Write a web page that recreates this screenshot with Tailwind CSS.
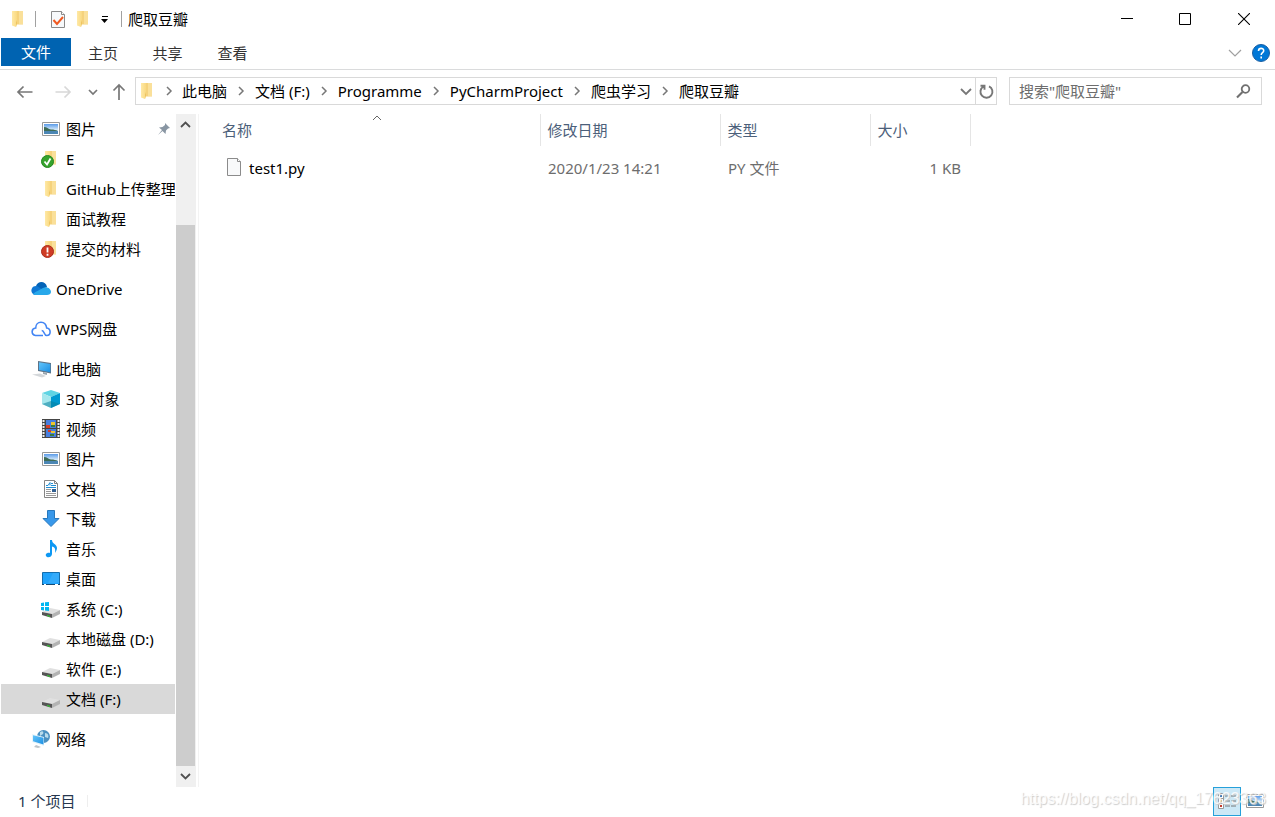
<!DOCTYPE html>
<html lang="zh-CN">
<head>
<meta charset="utf-8">
<meta name="viewport" content="width=device-width, initial-scale=1">
<title>爬取豆瓣</title>
<script src="https://cdn.jsdelivr.net/npm/@tailwindcss/browser@4"></script>
</head>
<body class="flex h-screen flex-col overflow-hidden bg-white font-['Noto_Sans','Noto_Sans_CJK_SC',sans-serif] text-[15px] leading-5 text-black">

<svg class="absolute size-0" aria-hidden="true">
  <defs>
    <linearGradient id="gold" x1="0" x2="1"><stop offset="0" stop-color="#ffe9a6"/><stop offset="1" stop-color="#f9d981"/></linearGradient>
    <linearGradient id="sky" x1="0" y1="0" x2="0" y2="1"><stop offset="0" stop-color="#5b9be8"/><stop offset=".6" stop-color="#dceefb"/></linearGradient>
    <linearGradient id="screen" x1="0" y1="0" x2="1" y2="1"><stop offset="0" stop-color="#63c5fb"/><stop offset="1" stop-color="#1c8fe3"/></linearGradient>
  </defs>
  <symbol id="folder" viewBox="0 0 20 20"><path d="M8 2h7v13.500H8z" fill="#f5d27c"/><path d="M11 2h4v13h-4z" fill="#fae09a"/><path d="M4 2h5v12l-1 4-4-1.500z" fill="url(#gold)"/><path d="M8 11l1 3-1 4z" fill="#ecc15c"/></symbol>
  <symbol id="picture" viewBox="0 0 20 20"><path d="M1.500 3.500h17v13h-17z" fill="#fff" stroke="#989898"/><path d="M3 5h14v10H3z" fill="url(#sky)"/><path d="M3 8c3 0 4 2 7 2.500 3 0 5 .5 7 1.500v1H3z" fill="#3d6b55"/><path d="M3 12h14v3H3z" fill="#4b86b4"/></symbol>
  <symbol id="drive" viewBox="0 0 20 20"><path d="M1 13l8-4 10 2-8 4z" fill="#e0e0e0"/><path d="M1 13l10 2v4L1 16z" fill="#555"/><path d="M11 15l8-4v4l-8 4z" fill="#b3b3b3"/><path d="M6 16l3 .7v1.300L6 17z" fill="#31c631"/></symbol>
  <symbol id="chev" viewBox="0 0 10 10"><path d="M3 1l4 4-4 4" fill="none" stroke="#777" stroke-width="1.500"/></symbol>
</svg>

<header>
  <div class="flex h-[38px] items-center">
    <div class="flex flex-1 items-center pl-2">
      <svg class="size-5"><use href="#folder"/></svg>
      <span class="ml-[7px] h-4 w-px bg-neutral-400"></span>
      <button class="ml-3 size-5" aria-label="属性"><svg viewBox="0 0 20 20"><path d="M3.500 2.500h10l3 3v13h-13z" fill="#f7f9fb" stroke="#8b8b8b"/><path d="M13.500 2.500v3h3" fill="#fff" stroke="#8b8b8b"/><path d="M5.500 11l3.500 4 6-7" fill="none" stroke="#f05a22" stroke-width="2"/></svg></button>
      <button class="ml-[5px] size-5" aria-label="新建文件夹"><svg class="size-5"><use href="#folder"/></svg></button>
      <button class="ml-2 size-2" aria-label="自定义快速访问工具栏"><svg viewBox="0 0 8 8"><path d="M1 1h6v1H1zM0 4h7L3.500 8z"/></svg></button>
      <span class="ml-3 h-4 w-px bg-neutral-400"></span>
      <h1 class="ml-[6px]">爬取豆瓣</h1>
    </div>
    <button class="flex h-full w-[58px] items-center justify-center" aria-label="最小化"><svg class="size-3" viewBox="0 0 12 12"><path d="M0 5.500h12" stroke="#000"/></svg></button>
    <button class="flex h-full w-[58px] items-center justify-center" aria-label="最大化"><svg class="size-3" viewBox="0 0 12 12"><path d="M.5.5h11v11H.5z" fill="none" stroke="#000"/></svg></button>
    <button class="mr-[2px] flex h-full w-[59px] items-center justify-center" aria-label="关闭"><svg class="size-3" viewBox="0 0 12 12"><path d="M0 0l12 12M12 0L0 12" fill="none" stroke="#000" stroke-width="1.100"/></svg></button>
  </div>
  <nav class="flex h-8 items-start border-b border-[#dadbdc] pl-px text-[#333]">
    <button class="h-7 w-[70px] bg-[#0063b1] text-white">文件</button>
    <button class="h-[30px] w-16">主页</button>
    <button class="h-[30px] w-[65px]">共享</button>
    <button class="h-[30px] w-[65px]">查看</button>
    <button class="mt-[9px] mr-[10px] ml-auto" aria-label="展开功能区"><svg class="h-3 w-[14px]" viewBox="0 0 14 12"><path d="M1 3l6 6 6-6" fill="none" stroke="#a0a0a0" stroke-width="1.200"/></svg></button>
    <button class="mt-[6px] mr-[5px]" aria-label="帮助"><svg class="size-[18px]" viewBox="0 0 18 18"><circle cx="9" cy="9" r="8.500" fill="#0078d7" stroke="#1a5fa3"/><path d="M6.500 7c0-3.500 5.200-3.300 5.200-.3 0 2-2.500 2-2.500 4.300M9.200 12.500v2" fill="none" stroke="#fff" stroke-width="1.600"/></svg></button>
  </nav>
  <div class="flex h-[42px] items-center pr-[13px]">
    <div class="flex w-[135px] shrink-0 items-center pt-[2px] pl-4">
      <button aria-label="后退"><svg class="size-[18px]" viewBox="0 0 18 18"><path d="M16.500 9H2M7.500 3.500L2 9l5.500 5.500" fill="none" stroke="#777" stroke-width="1.700"/></svg></button>
      <button class="ml-5" aria-label="前进"><svg class="size-[18px]" viewBox="0 0 18 18"><path d="M1.500 9H16M10.500 3.500L16 9l-5.500 5.500" fill="none" stroke="#d8d8d8" stroke-width="1.700"/></svg></button>
      <button class="ml-4" aria-label="最近浏览的位置"><svg class="size-[10px]" viewBox="0 0 10 10"><path d="M1 3l4 4 4-4" fill="none" stroke="#777" stroke-width="1.700"/></svg></button>
      <button class="ml-3" aria-label="上移"><svg class="size-[18px]" viewBox="0 0 18 18"><path d="M9 17V2M3.500 7.500L9 2l5.500 5.500" fill="none" stroke="#777" stroke-width="1.700"/></svg></button>
    </div>
    <div class="flex h-7 min-w-0 flex-1 items-center border border-[#d9d9d9] pl-px">
      <svg class="size-5"><use href="#folder"/></svg>
      <svg class="mr-2 ml-[7px] size-[10px]"><use href="#chev"/></svg>
      <nav class="flex flex-1 items-center pb-px whitespace-nowrap" aria-label="路径">
        <a href="#">此电脑</a><svg class="mx-[9px] size-[10px]"><use href="#chev"/></svg>
        <a href="#">文档 (F:)</a><svg class="mx-[9px] size-[10px]"><use href="#chev"/></svg>
        <a href="#">Programme</a><svg class="mx-[9px] size-[10px]"><use href="#chev"/></svg>
        <a href="#">PyCharmProject</a><svg class="mx-[9px] size-[10px]"><use href="#chev"/></svg>
        <a href="#">爬虫学习</a><svg class="mx-[9px] size-[10px]"><use href="#chev"/></svg>
        <a href="#">爬取豆瓣</a>
      </nav>
      <button class="px-[3px]" aria-label="以前的位置"><svg class="size-3" viewBox="0 0 12 12"><path d="M1 4l5 5 5-5" fill="none" stroke="#777" stroke-width="1.800"/></svg></button>
      <button class="flex h-full w-[21px] items-center justify-center border-l border-[#d9d9d9]" aria-label="刷新"><svg class="size-4" viewBox="0 0 16 16"><path d="M11 3.300a6 6 0 1 1-5.500.2M2.500 2.800h4v4" fill="none" stroke="#777" stroke-width="1.900"/></svg></button>
    </div>
    <form class="ml-3 flex h-7 w-[253px] items-center border border-[#d9d9d9] pr-[10px] pl-[9px]">
      <input class="min-w-0 flex-1 outline-none placeholder:text-[#6d6d6d]" type="search" aria-label="搜索" placeholder='搜索"爬取豆瓣"'>
      <button type="button" aria-label="开始搜索"><svg class="size-4" viewBox="0 0 16 16"><circle cx="10.500" cy="6" r="3.800" fill="none" stroke="#707070" stroke-width="1.800"/><path d="M7.500 9L2 14.500" stroke="#707070" stroke-width="2.200"/></svg></button>
    </form>
  </div>
</header>

<main class="flex min-h-0 flex-1 pt-[2px]">
  <aside class="flex w-[199px] shrink-0 border-r border-[#f3f3f3]">
    <nav class="ml-px w-[174px] overflow-hidden whitespace-nowrap" aria-label="导航窗格">
      <ul>
        <li><a href="#" class="flex h-[30px] items-center gap-[5px] pl-10"><svg class="size-5 shrink-0"><use href="#picture"/></svg>图片<svg class="mr-1 ml-auto size-[14px]" viewBox="0 0 14 14"><path d="M8 1l5 5-2 .5-2 2-.5 3.500-3-3L1 13 5 8 2 5.500l3.500-.5L8 3z" fill="#8996a3"/></svg></a></li>
        <li><a href="#" class="flex h-[30px] items-center gap-[5px] pl-10"><svg class="size-5 shrink-0" viewBox="0 0 20 20"><use href="#folder"/><circle cx="6.500" cy="12.500" r="6" fill="#36a32d" stroke="#23871f"/><path d="M3.500 12.500l2.500 3L9.500 9.500" fill="none" stroke="#fff" stroke-width="1.800"/></svg>E</a></li>
        <li><a href="#" class="flex h-[30px] items-center gap-[5px] pl-10"><svg class="size-5 shrink-0"><use href="#folder"/></svg>GitHub上传整理</a></li>
        <li><a href="#" class="flex h-[30px] items-center gap-[5px] pl-10"><svg class="size-5 shrink-0"><use href="#folder"/></svg>面试教程</a></li>
        <li><a href="#" class="flex h-[30px] items-center gap-[5px] pl-10"><svg class="size-5 shrink-0" viewBox="0 0 20 20"><use href="#folder"/><circle cx="6.500" cy="12.500" r="6" fill="#cf3c25" stroke="#a92c1b"/><path d="M6.500 8.500v5M6.500 14.700v2" stroke="#fff" stroke-width="1.800"/></svg>提交的材料</a></li>
        <li class="mt-[10px]"><a href="#" class="flex h-[30px] items-center gap-[5px] pl-[30px]"><svg class="size-5 shrink-0" viewBox="0 0 20 20"><path d="M5 7c2-6 10-5 11 1l-8 4z" fill="#0364b8"/><path d="M4 16a4.500 4.500 0 1 1 2-9l8 5-5 4z" fill="#0f78d4"/><path d="M2 15c3-3 7-4 10-6 4-2 8 1 8 4 0 2-2 3-4 3H5c-1.500 0-2.500-.4-3-1z" fill="#28a8ea"/></svg>OneDrive</a></li>
        <li class="mt-[10px]"><a href="#" class="flex h-[30px] items-center gap-[5px] pl-[30px]"><svg class="size-5 shrink-0" viewBox="0 0 20 20"><path d="M12 16.500H4.500C-.2 15.500.2 9.500 4.700 9c0-7.500 10-8 11 0 4.600.7 4.500 7.500 0 7.500-3 0-2-5-5-5" fill="none" stroke="#4285f4" stroke-width="1.600"/></svg>WPS网盘</a></li>
        <li class="mt-[10px]"><a href="#" class="flex h-[30px] items-center gap-[5px] pl-[30px]"><svg class="size-5 shrink-0" viewBox="0 0 20 20"><path d="M7 2l13 2v10.500L7 12z" fill="#5d7387"/><path d="M8 3.200l11.300 1.700v8.300L8 11z" fill="url(#screen)"/><path d="M1 15.500l8-1 6 2.500-4 1.500z" fill="#d4d7da"/><path d="M12 13l4 1v2l-4-1z" fill="#9aa5ae"/></svg>此电脑</a></li>
        <li><a href="#" class="flex h-[30px] items-center gap-[5px] pl-10"><svg class="size-5 shrink-0" viewBox="0 0 20 20"><path d="M1 4l9-3 9 3-9 4z" fill="#5fd4e3"/><path d="M1 4l9 4v11l-9-4z" fill="#a5e7ed"/><path d="M19 4l-9 4v11l9-4z" fill="#0099d0"/><path d="M1 15l9-3 9 3-9 4z" fill="#087f9c" opacity=".55"/></svg>3D 对象</a></li>
        <li><a href="#" class="flex h-[30px] items-center gap-[5px] pl-10"><svg class="size-5 shrink-0" viewBox="0 0 20 20"><path d="M1 0h18v19H1z" fill="#454545"/><path d="M2.500 1v18M17.500 1v18" stroke="#eee" stroke-width="2" stroke-dasharray="2 1"/><path d="M5 1h10v8H5zM5 10h10v8H5z" fill="#477ede"/><path d="M5 6h4v3H5zM7 11h3v2H7z" fill="#d63c28"/><path d="M10 3h4v3h-4zM10 12h4v2h-4z" fill="#efc52d"/><path d="M10 6h4v2h-4zM9 15h4v2H9z" fill="#397b3b"/></svg>视频</a></li>
        <li><a href="#" class="flex h-[30px] items-center gap-[5px] pl-10"><svg class="size-5 shrink-0"><use href="#picture"/></svg>图片</a></li>
        <li><a href="#" class="flex h-[30px] items-center gap-[5px] pl-10"><svg class="size-5 shrink-0" viewBox="0 0 20 20"><path d="M3.500 1.500h10l3 3v14h-13z" fill="#fff" stroke="#858585"/><path d="M13.500 1.500v3h3" fill="none" stroke="#858585"/><path d="M5 6.500h2l2-3v3M10 4.500h2M10 6.500h5M5 8.500h10" fill="none" stroke="#228ed2"/><path d="M5 10.500h5M5 12.500h5M5 14.500h10M5 16.500h10" stroke="#999"/><path d="M11 10h4v3h-4z" fill="#315f91"/></svg>文档</a></li>
        <li><a href="#" class="flex h-[30px] items-center gap-[5px] pl-10"><svg class="size-5 shrink-0" viewBox="0 0 20 20"><path d="M6.500 1.500h7v8h4.500L10 17.500 2 9.500h4.500z" fill="#3898ea" stroke="#2778bd"/></svg>下载</a></li>
        <li><a href="#" class="flex h-[30px] items-center gap-[5px] pl-10"><svg class="size-5 shrink-0" viewBox="0 0 20 20"><path d="M9 1h2c0 4 5 4 5 8 0 2-1 3-2 5 1-5-1-6-3-6.500V15c0 2.500-3 4-5 3-3-2 0-5 3-4z" fill="#0d98f3"/></svg>音乐</a></li>
        <li><a href="#" class="flex h-[30px] items-center gap-[5px] pl-10"><svg class="size-5 shrink-0" viewBox="0 0 20 20"><path d="M1.500 3.500h17v12h-17z" fill="#20a3fb" stroke="#146eae"/><path d="M12 4h6v10H7z" fill="#48b4fb" opacity=".5"/><path d="M1 15.500h18" stroke="#174a72"/><path d="M3 15.500h2M14 15.500h3" stroke="#fff"/></svg>桌面</a></li>
        <li><a href="#" class="flex h-[30px] items-center gap-[5px] pl-10"><svg class="size-5 shrink-0" viewBox="0 0 20 20"><use href="#drive"/><path d="M0 4l3-.5V7H0zM4 3.300L8 3v4H4zM0 8h3v3.500L0 11zM4 8h4v4l-4-.4z" fill="#00b7f1"/></svg>系统 (C:)</a></li>
        <li><a href="#" class="flex h-[30px] items-center gap-[5px] pl-10"><svg class="size-5 shrink-0"><use href="#drive"/></svg>本地磁盘 (D:)</a></li>
        <li><a href="#" class="flex h-[30px] items-center gap-[5px] pl-10"><svg class="size-5 shrink-0"><use href="#drive"/></svg>软件 (E:)</a></li>
        <li><a href="#" aria-current="true" class="flex h-[30px] items-center gap-[5px] bg-[#d9d9d9] pl-10"><svg class="size-5 shrink-0"><use href="#drive"/></svg>文档 (F:)</a></li>
        <li class="mt-[10px]"><a href="#" class="flex h-[30px] items-center gap-[5px] pl-[30px]"><svg class="size-5 shrink-0" viewBox="0 0 20 20"><circle cx="12.500" cy="7.500" r="6.500" fill="#4b91c1"/><path d="M9 3c3-2 4 0 3 2l-3 2zM14 4c3 0 4 3 3 5l-3-1z" fill="#b9dcec"/><path d="M1 5l12 3v9L1 13z" fill="#e6f4fb"/><path d="M2 6.300l10.500 2.500v6.800L2 12.300z" fill="url(#screen)"/><path d="M5 16l5 2-3 1-4-1z" fill="#bcc4c9"/></svg>网络</a></li>
      </ul>
    </nav>
    <div class="ml-px flex w-5 flex-col bg-[#f0f0f0]">
      <button class="flex h-[21px] w-[19px] items-center justify-center" aria-label="向上滚动"><svg class="size-[11px]" viewBox="0 0 11 11"><path d="M1 8l4.500-4.500L10 8" fill="none" stroke="#505050" stroke-width="1.800"/></svg></button>
      <div class="mt-[90px] w-[19px] flex-1 bg-[#cdcdcd]"></div>
      <button class="flex h-[21px] w-[19px] items-center justify-center" aria-label="向下滚动"><svg class="size-[11px]" viewBox="0 0 11 11"><path d="M1 3l4.500 4.500L10 3" fill="none" stroke="#505050" stroke-width="1.800"/></svg></button>
    </div>
  </aside>
  <section class="min-w-0 flex-1 pl-[14px]">
    <table class="w-[757px] table-fixed border-collapse text-left text-[#6d6d6d]">
      <colgroup><col class="w-[327px]"><col class="w-[180px]"><col class="w-[150px]"><col class="w-[100px]"></colgroup>
      <thead class="text-[#4c607a]">
        <tr class="h-8">
          <th class="relative border-r border-[#e5e5e5] pl-[9px] font-normal" aria-sort="ascending">名称<svg class="absolute -top-px left-[159px] h-[10px] w-[10px]" viewBox="0 0 10 10"><path d="M1 7l4-4 4 4" fill="none" stroke="#666"/></svg></th>
          <th class="border-r border-[#e5e5e5] pl-[7px] font-normal">修改日期</th>
          <th class="border-r border-[#e5e5e5] pl-[7px] font-normal">类型</th>
          <th class="border-r border-[#e5e5e5] pl-[7px] font-normal">大小</th>
        </tr>
      </thead>
      <tbody>
        <tr class="h-11">
          <td class="pl-[11px] text-black"><a href="#" class="flex items-center gap-[5px]"><svg class="size-5" viewBox="0 0 20 20"><path d="M3.500.5h10l3 3v14h-13z" fill="#f8f9fa" stroke="#8b8b8b"/><path d="M13.500.5v3h3" fill="#fff" stroke="#8b8b8b"/></svg>test1.py</a></td>
          <td class="pl-2">2020/1/23 14:21</td>
          <td class="pl-2">PY 文件</td>
          <td class="pr-[9px] text-right">1 KB</td>
        </tr>
      </tbody>
    </table>
  </section>
</main>

<footer class="relative flex h-[30px] items-center pb-[2px] pl-[18px] text-[#26374f]">
  <span>1 个项目</span><span class="ml-3 h-3 w-px bg-[#eee]"></span>
  <button class="ml-auto flex h-[29px] w-7 items-center justify-center border border-[#26a0da] bg-[#cce8f6]" aria-label="详细信息"><svg class="size-[18px]" viewBox="0 0 18 18"><path d="M.5 1.500h5v5h-5zM.5 6.500h5v5h-5zM.5 11.500h5v5h-5z" fill="#fff" stroke="#999"/><path d="M2 3h2v2H2z" fill="#3b78b9"/><path d="M2 8h2v2H2z" fill="#d3ad4c"/><path d="M2 13h2v2H2z" fill="#c4392a"/><path d="M7 4h5M13 4h5M7 9h5M13 9h5M7 14h5M13 14h5" stroke="#777"/></svg></button>
  <button class="mr-[10px] ml-1" aria-label="大缩略图"><svg class="size-5"><use href="#picture"/></svg></button>
  <span class="pointer-events-none absolute top-0 right-[9px] font-['Liberation_Sans',sans-serif] text-base text-white/80 [text-shadow:1px_1px_1px_#ccc]">https://blog.csdn.net/qq_17623363</span>
</footer>
</body>
</html>
